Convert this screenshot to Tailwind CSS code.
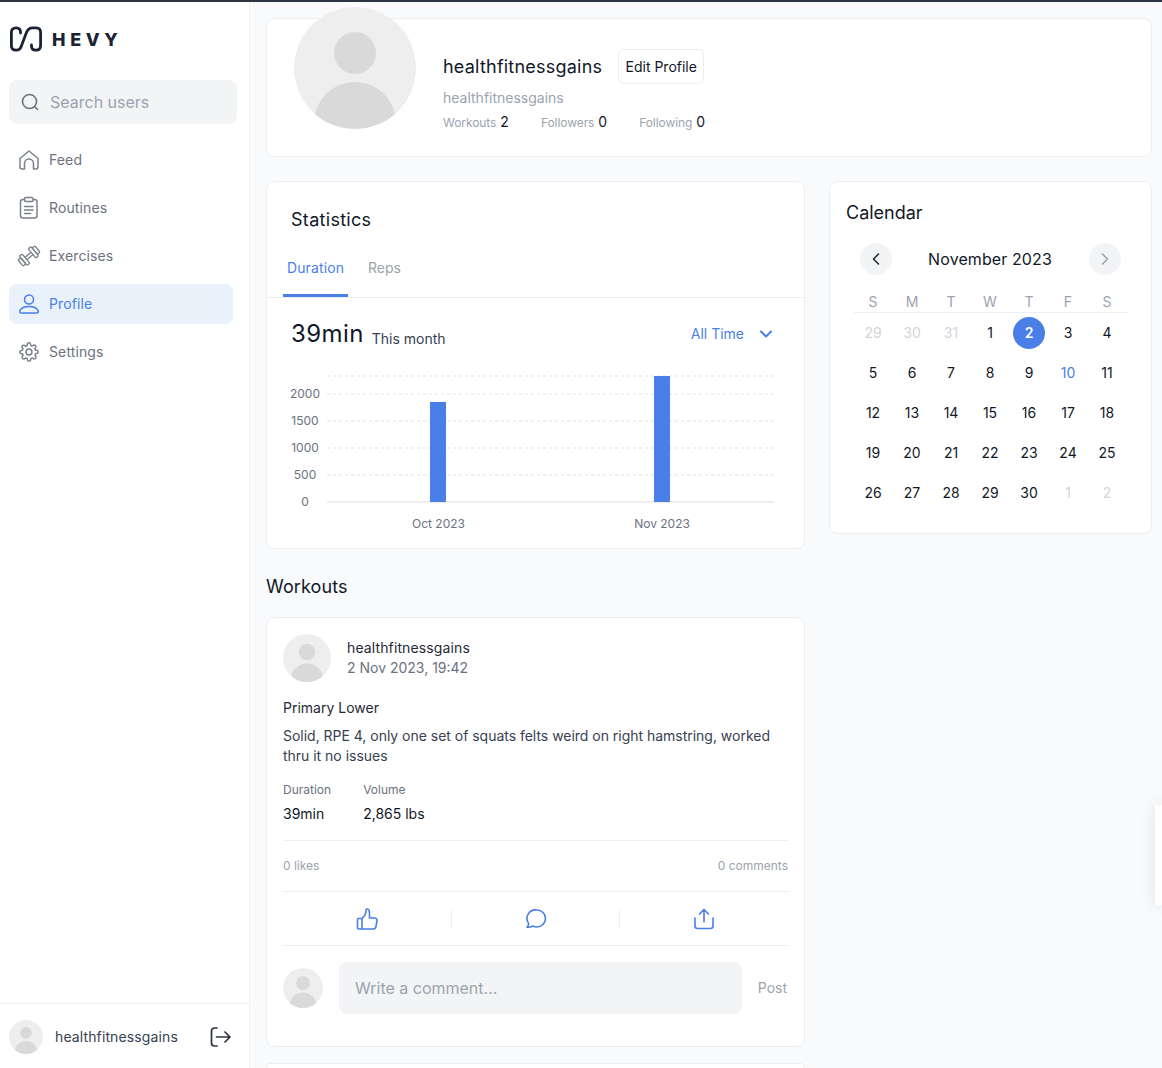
<!DOCTYPE html>
<html lang="en">
<head>
    <meta charset="UTF-8">
    <title>Hevy - Profile</title>
    <script src="https://cdn.jsdelivr.net/npm/@tailwindcss/browser@4"></script>
</head>
<body class="h-[1068px] overflow-hidden bg-[#f9fafc] font-['Inter',sans-serif] text-[#111827] relative">
    <svg class="hidden">
        <symbol id="avatar" viewBox="0 0 122 122">
            <rect width="122" height="122" fill="#eeeeee"/>
            <circle cx="61" cy="46" r="21" fill="#d9d9d9"/>
            <circle cx="61" cy="116" r="41" fill="#d9d9d9"/>
        </symbol>
    </svg>

    <div class="h-[2px] bg-[#2d3340]"></div>

    <div class="flex h-[1066px]">
        <!-- sidebar -->
        <aside class="w-[250px] shrink-0 bg-white border-r border-[#f0f1f3] flex flex-col">
            <div class="flex items-center h-[74px] pl-[10px] gap-[10px]">
                <svg class="w-[32px] h-[26px]" viewBox="0 0 32 26" fill="none" stroke="#1b2233" stroke-width="2.800" stroke-linecap="round" stroke-linejoin="round">
                    <path d="M10.500 7V6C10.500 3.500 9 1.800 6.500 1.800H6C3 1.800 1.400 3.500 1.400 6.500V19.500C1.400 22.500 3 24.200 6 24.200H6.500C9 24.200 10.200 23 11 21L15.500 9C17 4 18.500 1.800 22 1.800H26C29 1.800 30.600 3.500 30.600 6.500V19.500C30.600 22.500 29 24.200 26 24.200H25.500C23 24.200 21.500 22.500 21.500 20V19"/>
                </svg>
                <span class="pt-[2px] text-[18px] font-extrabold tracking-[0.26em] text-[#1b2233] leading-none">HEVY</span>
            </div>

            <div class="mx-[9px] mt-[4px] h-[44px] w-[228px] rounded-lg bg-[#f3f4f6] flex items-center pl-[12px] gap-[11px]">
                <svg class="w-[18px] h-[18px]" viewBox="0 0 18 18" fill="none" stroke="#6b7280" stroke-width="1.600" stroke-linecap="round"><circle cx="8.500" cy="8.500" r="7"/><path d="M14 14l2.500 2.500"/></svg>
                <span class="text-base text-[#9ca3af]">Search users</span>
            </div>

            <nav class="mt-[16px] flex flex-col gap-[8px] text-sm text-[#6b7280] tracking-[0.12px]">
                <a class="mx-[9px] h-[40px] w-[224px] flex items-center pl-[10px] gap-[10px]">
                    <svg class="w-[20px] h-[20px]" viewBox="0 0 20 20" fill="none" stroke="#7a808c" stroke-width="1.500" stroke-linejoin="round"><path d="M1 8.500L10 1l9 7.500v8.500a2 2 0 0 1-2 2h-2.500v-5.500a4.500 4.500 0 0 0-9 0v5.500H3a2 2 0 0 1-2-2z"/></svg>
                    Feed
                </a>
                <a class="mx-[9px] h-[40px] w-[224px] flex items-center pl-[10px] gap-[10px]">
                    <svg class="w-[20px] h-[20px] overflow-visible" viewBox="0 0 20 20" fill="none" stroke="#7a808c" stroke-width="1.500" stroke-linecap="round" stroke-linejoin="round"><rect x="1.500" y="1.500" width="16.500" height="18.500" rx="2.500"/><rect x="5.500" y="-0.500" width="8.500" height="4" rx="1.200" fill="#ffffff"/><path d="M5.500 8.500h8.500M5.500 12h8.500M5.500 15.500h6"/></svg>
                    Routines
                </a>
                <a class="mx-[9px] h-[40px] w-[224px] flex items-center pl-[10px] gap-[10px]">
                    <svg class="w-[20px] h-[20px] overflow-visible" viewBox="0 0 20 20" fill="none" stroke="#7a808c" stroke-width="1.300" stroke-linejoin="round">
                        <g transform="rotate(-40 10 10)">
                            <rect x="-1" y="6" width="3.500" height="8" rx="1"/>
                            <rect x="2.500" y="4" width="3.500" height="12" rx="1"/>
                            <path d="M6 8.500h8M6 11.500h8"/>
                            <rect x="14" y="4" width="3.500" height="12" rx="1"/>
                            <rect x="17.500" y="6" width="3.500" height="8" rx="1"/>
                        </g>
                    </svg>
                    Exercises
                </a>
                <a class="mx-[9px] h-[40px] w-[224px] flex items-center pl-[10px] gap-[10px] rounded-lg bg-[#e9f1fb] text-[#4a7fe8]">
                    <svg class="w-[20px] h-[20px]" viewBox="0 0 20 20" fill="none" stroke="#4a7fe8" stroke-width="1.500"><circle cx="10" cy="5.500" r="4.500"/><path d="M2 19c-1.500 0-1.500-1.500-1-2.500C2.500 13.500 6 12.500 10 12.500s7.500 1 9 4c.5 1 .5 2.500-1 2.500z" stroke-linejoin="round"/></svg>
                    Profile
                </a>
                <a class="mx-[9px] h-[40px] w-[224px] flex items-center pl-[10px] gap-[10px]">
                    <svg class="w-[20px] h-[20px]" viewBox="0 0 24 24" fill="none" stroke="#7a808c" stroke-width="1.800" stroke-linecap="round" stroke-linejoin="round"><circle cx="12" cy="12" r="3.500"/><path d="M19.400 15a1.650 1.650 0 0 0 .33 1.820l.06.06a2 2 0 1 1-2.830 2.830l-.06-.06a1.650 1.650 0 0 0-2.820 1.170V21a2 2 0 0 1-4 0v-.09a1.650 1.650 0 0 0-2.820-1.170l-.06.06a2 2 0 1 1-2.830-2.830l.06-.06a1.650 1.650 0 0 0-1.170-2.820H3a2 2 0 0 1 0-4h.09a1.650 1.650 0 0 0 1.170-2.820l-.06-.06a2 2 0 1 1 2.830-2.830l.06.06a1.650 1.650 0 0 0 2.820-1.170V3a2 2 0 0 1 4 0v.09a1.650 1.650 0 0 0 2.820 1.170l.06-.06a2 2 0 1 1 2.830 2.830l-.06.06a1.650 1.650 0 0 0 1.170 2.820H21a2 2 0 0 1 0 4h-.09a1.650 1.650 0 0 0-1.510 1.090z"/></svg>
                    Settings
                </a>
            </nav>

            <div class="mt-auto h-[65px] border-t border-[#f0f1f3] flex items-center pl-[9px] pt-[2px]">
                <svg class="w-[34px] h-[34px] rounded-full"><use href="#avatar"/></svg>
                <span class="ml-[12px] text-sm text-[#374151] tracking-[0.12px]">healthfitnessgains</span>
                <svg class="ml-auto mr-[18px] w-[21px] h-[20px]" viewBox="0 0 21 20" fill="none" stroke="#2d3340" stroke-width="1.700" stroke-linecap="round" stroke-linejoin="round"><path d="M7 1H4.500C2.500 1 1.500 2 1.500 4v12c0 2 1 3 3 3H7"/><path d="M6.500 10H20M15 5l5 5-5 5"/></svg>
            </div>
        </aside>

        <!-- content -->
        <main class="flex-1 pl-[16px] pr-[10px] pt-[16px] overflow-hidden">
            <section class="h-[139px] rounded-lg bg-white border border-[#eceef1] flex pl-[27px]">
                <svg class="w-[122px] h-[122px] rounded-full -mt-[12px] shrink-0"><use href="#avatar"/></svg>
                <div class="ml-[27px] pt-[30px]">
                    <div class="flex items-center h-[35px]">
                        <span class="text-lg leading-none tracking-[0.22px]">healthfitnessgains</span>
                        <span class="ml-[16px] h-[35px] w-[86px] rounded-md border border-[#eceef1] flex items-center justify-center text-sm">Edit Profile</span>
                    </div>
                    <div class="mt-[4px] text-sm leading-[20px] text-[#9ca3af]">healthfitnessgains</div>
                    <div class="mt-[4px] flex gap-[32px] text-sm leading-[20px]">
                        <span><span class="text-xs text-[#9ca3af] tracking-[-0.06px]">Workouts</span> 2</span>
                        <span><span class="text-xs text-[#9ca3af] tracking-[-0.06px]">Followers</span> 0</span>
                        <span><span class="text-xs text-[#9ca3af] tracking-[-0.06px]">Following</span> 0</span>
                    </div>
                </div>
            </section>

            <div class="mt-[24px] flex gap-[24px] items-start">
                <div class="w-[539px] shrink-0">
                    <!-- statistics -->
                    <section class="h-[368px] rounded-lg bg-white border border-[#eceef1]">
                        <h2 class="pl-[24px] pt-[26px] text-lg leading-[24px] tracking-[0.3px]">Statistics</h2>
                        <div class="mt-[26px] h-[40px] border-b border-[#eceef1] flex pl-[16px] text-sm">
                            <span class="h-[39px] w-[65px] border-b-[3px] border-[#4a7fe8] text-center text-[#4a7fe8] tracking-[0.12px]">Duration</span>
                            <span class="ml-[20px] text-[#9ca3af]">Reps</span>
                        </div>
                        <div class="flex items-end pl-[24px] pr-[31px] mt-[20px] h-[32px]">
                            <span class="text-2xl leading-[32px] tracking-[0.4px]">39min</span>
                            <span class="ml-[8px] -mb-[1px] text-sm leading-[24px] text-[#374151]">This month</span>
                            <span class="ml-auto self-center text-sm text-[#4a7fe8]">All Time</span>
                            <svg class="ml-[15px] self-center w-[14px] h-[14px]" viewBox="0 0 14 14" fill="none" stroke="#4a7fe8" stroke-width="2" stroke-linecap="round" stroke-linejoin="round"><path d="M2 4.500l5 5 5-5"/></svg>
                        </div>
                        <svg class="block mt-[16px]" width="537" height="170" viewBox="267 366 537 170" font-size="12" fill="#6b7280">
                            <path d="M327 376H774M327 394H774M327 421H774M327 448H774M327 475H774" stroke="#f0f0f0" stroke-width="2" stroke-dasharray="3 3"/>
                            <path d="M327 502H774" stroke="#eceef1" stroke-width="2"/>
                            <rect x="430" y="402" width="16" height="100" fill="#4a7fe8"/>
                            <rect x="654" y="376" width="16" height="126" fill="#4a7fe8"/>
                            <g text-anchor="middle">
                                <text x="305" y="398">2000</text>
                                <text x="305" y="425">1500</text>
                                <text x="305" y="452">1000</text>
                                <text x="305" y="479">500</text>
                                <text x="305" y="506">0</text>
                                <text x="438.500" y="528">Oct 2023</text>
                                <text x="662" y="528">Nov 2023</text>
                            </g>
                        </svg>
                    </section>

                    <h2 class="mt-[26px] text-lg leading-[24px] tracking-[0.1px]">Workouts</h2>

                    <!-- workout card -->
                    <section class="mt-[18px] h-[430px] rounded-lg bg-white border border-[#eceef1] px-[16px] pt-[16px] text-sm">
                        <div class="flex items-center h-[48px]">
                            <svg class="w-[48px] h-[48px] rounded-full shrink-0"><use href="#avatar"/></svg>
                            <div class="ml-[16px]">
                                <div class="leading-[20px] text-[#1f2937] tracking-[0.12px]">healthfitnessgains</div>
                                <div class="leading-[20px] text-[#6b7280]">2 Nov 2023, 19:42</div>
                            </div>
                        </div>
                        <div class="mt-[16px] leading-[20px] text-[#1f2937]">Primary Lower</div>
                        <p class="mt-[8px] leading-[20px] text-[#374151] tracking-[-0.02px]">Solid, RPE 4, only one set of squats felts weird on right hamstring, worked thru it no issues</p>
                        <div class="mt-[16px] flex gap-[32px]">
                            <div><div class="text-xs leading-[16px] text-[#6b7280]">Duration</div><div class="mt-[6px] leading-[20px]">39min</div></div>
                            <div><div class="text-xs leading-[16px] text-[#6b7280]">Volume</div><div class="mt-[6px] leading-[20px]">2,865 lbs</div></div>
                        </div>
                        <div class="mt-[16px] h-[52px] border-y border-[#eceef1] flex items-center justify-between text-xs text-[#9ca3af]">
                            <span>0 likes</span><span>0 comments</span>
                        </div>
                        <div class="h-[54px] border-b border-[#eceef1] flex items-center">
                            <div class="flex-1 flex justify-center">
                                <svg class="w-[22px] h-[22px]" viewBox="0 0 22 22" fill="none" stroke="#4a7fe8" stroke-width="1.600" stroke-linejoin="round" stroke-linecap="round"><path d="M6 10.500H2.500a1 1 0 0 0-1 1v8.500a1 1 0 0 0 1 1H6zM6 21h11c1.500 0 2.700-1 3-2.500l1-6c.2-1.500-.8-2.500-2.300-2.500H13.500V4.500C13.500 2.500 12.500 1 11 1c-.6 0-1 .5-1 1.200 0 3.800-1.500 6.300-4 8.300z"/></svg>
                            </div>
                            <div class="w-px h-[19px] bg-[#eceef1]"></div>
                            <div class="flex-1 flex justify-center">
                                <svg class="w-[22px] h-[22px]" viewBox="0 0 22 22" fill="none" stroke="#4a7fe8" stroke-width="1.600" stroke-linejoin="round"><path d="M12 2a8.500 8.500 0 0 1 0 17c-1.500 0-2.800-.3-4-1-1.800 1-3.800 1.400-6 1.300 1-1 1.600-2.300 1.600-4A8.500 8.500 0 0 1 12 2z"/></svg>
                            </div>
                            <div class="w-px h-[19px] bg-[#eceef1]"></div>
                            <div class="flex-1 flex justify-center">
                                <svg class="w-[22px] h-[22px]" viewBox="0 0 22 22" fill="none" stroke="#4a7fe8" stroke-width="1.600" stroke-linejoin="round" stroke-linecap="round"><path d="M11 14V1.500M6.500 6L11 1.500 15.500 6M2 10v8c0 1.700 1 2.500 2.500 2.500h13c1.500 0 2.500-.8 2.500-2.500v-8"/></svg>
                            </div>
                        </div>
                        <div class="mt-[16px] flex items-center">
                            <svg class="w-[40px] h-[40px] rounded-full shrink-0"><use href="#avatar"/></svg>
                            <div class="ml-[16px] h-[52px] flex-1 rounded-lg bg-[#f3f4f6] flex items-center pl-[16px] text-base text-[#9ca3af]">Write a comment...</div>
                            <span class="ml-[16px] mr-px text-[#9ca3af]">Post</span>
                        </div>
                    </section>

                    <section class="mt-[16px] h-[5px] rounded-t-lg bg-white border border-b-0 border-[#eceef1]"></section>
                </div>

                <!-- calendar -->
                <section class="w-[323px] h-[353px] rounded-lg bg-white border border-[#eceef1] text-sm">
                    <h2 class="pl-[16px] pt-[19px] text-lg leading-[24px]">Calendar</h2>
                    <div class="mt-[18px] mx-[30px] h-[32px] flex items-center justify-between">
                        <span class="w-[32px] h-[32px] rounded-full bg-[#f3f4f6] flex items-center justify-center">
                            <svg class="w-[12px] h-[12px]" viewBox="0 0 12 12" fill="none" stroke="#1f2937" stroke-width="1.600" stroke-linecap="round" stroke-linejoin="round"><path d="M8.500 1L3.500 6l5 5"/></svg>
                        </span>
                        <span class="text-base tracking-[0.1px] pr-px">November 2023</span>
                        <span class="w-[32px] h-[32px] rounded-full bg-[#f3f4f6] flex items-center justify-center">
                            <svg class="w-[12px] h-[12px]" viewBox="0 0 12 12" fill="none" stroke="#9ca3af" stroke-width="1.600" stroke-linecap="round" stroke-linejoin="round"><path d="M3.500 1l5 5-5 5"/></svg>
                        </span>
                    </div>
                    <div class="mx-[24px] mt-[19px] grid grid-cols-[repeat(7,39px)] h-[16px] text-center leading-[16px] text-[#9ca3af] [&>span]:pr-px">
                        <span>S</span><span>M</span><span>T</span><span>W</span><span>T</span><span>F</span><span>S</span>
                    </div>
                    <div class="mx-[24px] mt-[2px] border-t border-[#eceef1] grid grid-cols-[repeat(7,39px)] auto-rows-[40px] text-center leading-[40px] [&>span]:pr-px">
                        <span class="text-[#d1d5db]">29</span><span class="text-[#d1d5db]">30</span><span class="text-[#d1d5db]">31</span><span>1</span>
                        <span class="flex items-center justify-center"><span class="w-[32px] h-[32px] rounded-full bg-[#4a7fe8] text-white font-semibold leading-[32px]">2</span></span>
                        <span>3</span><span>4</span>
                        <span>5</span><span>6</span><span>7</span><span>8</span><span>9</span><span class="text-[#4a7fe8]">10</span><span>11</span>
                        <span>12</span><span>13</span><span>14</span><span>15</span><span>16</span><span>17</span><span>18</span>
                        <span>19</span><span>20</span><span>21</span><span>22</span><span>23</span><span>24</span><span>25</span>
                        <span>26</span><span>27</span><span>28</span><span>29</span><span>30</span><span class="text-[#d1d5db]">1</span><span class="text-[#d1d5db]">2</span>
                    </div>
                </section>
            </div>
        </main>
    </div>

    <!-- chat widget peeking in from the right edge -->
    <div class="absolute left-[1155px] top-[805px] w-[7px] h-[100px] bg-white shadow-[0_0_16px_rgba(0,0,0,0.14)]"></div>
</body>
</html>
